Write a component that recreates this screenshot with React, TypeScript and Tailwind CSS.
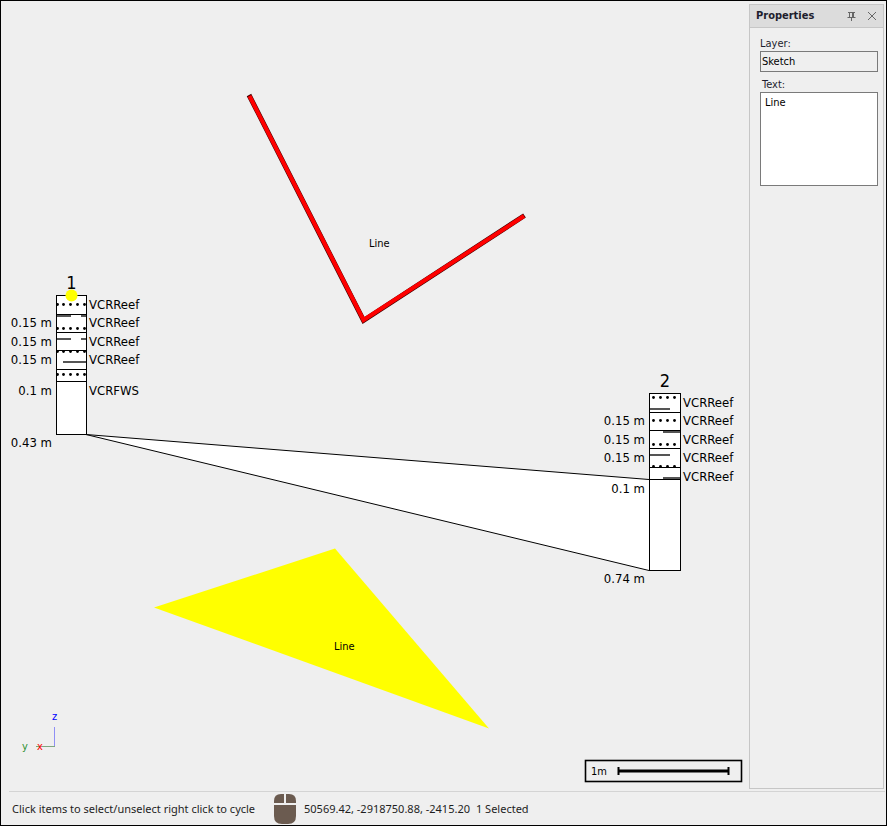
import type { ReactNode } from 'react';

interface Seam {
  y: number;
  x: number;
  w: number;
}

interface Log {
  name: string;
  x: number;
  width: number;
  top: number;
  bottom: number;
  dividers: number[];
  dotRows: number[];
  dots: number[];
  seams: Seam[];
  widths: { y: number; text: string }[];
  units: { y: number; text: string }[];
}

const LOGS: Log[] = [
  {
    name: '1',
    x: 56,
    width: 30,
    top: 295,
    bottom: 434,
    dividers: [314, 332, 350, 369, 381],
    dotRows: [304, 328, 351, 374],
    dots: [57, 63, 70, 77, 84],
    seams: [
      { y: 316, x: 57, w: 14 },
      { y: 316, x: 81, w: 5 },
      { y: 339, x: 57, w: 14 },
      { y: 339, x: 81, w: 5 },
      { y: 362, x: 63, w: 23 },
    ],
    widths: [
      { y: 327, text: '0.15 m' },
      { y: 346, text: '0.15 m' },
      { y: 364, text: '0.15 m' },
      { y: 395, text: '0.1 m' },
      { y: 447, text: '0.43 m' },
    ],
    units: [
      { y: 309, text: 'VCRReef' },
      { y: 327, text: 'VCRReef' },
      { y: 346, text: 'VCRReef' },
      { y: 364, text: 'VCRReef' },
      { y: 395, text: 'VCRFWS' },
    ],
  },
  {
    name: '2',
    x: 649,
    width: 31,
    top: 393,
    bottom: 570,
    dividers: [412, 430, 448, 467, 479],
    dotRows: [397, 420, 444, 466],
    dots: [653, 660, 667, 674],
    seams: [
      { y: 409, x: 650, w: 20 },
      { y: 432, x: 663, w: 17 },
      { y: 455, x: 650, w: 20 },
      { y: 478, x: 663, w: 17 },
    ],
    widths: [
      { y: 425, text: '0.15 m' },
      { y: 444, text: '0.15 m' },
      { y: 462, text: '0.15 m' },
      { y: 493, text: '0.1 m' },
      { y: 583, text: '0.74 m' },
    ],
    units: [
      { y: 407, text: 'VCRReef' },
      { y: 425, text: 'VCRReef' },
      { y: 444, text: 'VCRReef' },
      { y: 462, text: 'VCRReef' },
      { y: 481, text: 'VCRReef' },
    ],
  },
];

function LogColumn({ log, children }: { log: Log; children?: ReactNode }) {
  const right = log.x + log.width;
  return (
    <g>
      <rect
        x={log.x + 0.5}
        y={log.top + 0.5}
        width={log.width}
        height={log.bottom - log.top}
        fill="#fff"
        stroke="#000"
      />
      {log.seams.map((s) => (
        <rect key={`${s.x}-${s.y}`} x={s.x} y={s.y - 1} width={s.w} height="2" fill="#555" />
      ))}
      {log.dotRows.map((y) =>
        log.dots.map((x) => <circle key={`${x}-${y}`} cx={x + 0.5} cy={y + 0.5} r="1.4" />),
      )}
      {log.dividers.map((y) => (
        <rect key={y} x={log.x} y={y} width={log.width + 1} height="1" />
      ))}
      {children}
      <text x={(log.x + right + 1) / 2} y={log.top - 6} textAnchor="middle" className="text-[18px]">
        {log.name}
      </text>
      {log.widths.map((l) => (
        <text key={l.y} x={log.x - 4} y={l.y} textAnchor="end">
          {l.text}
        </text>
      ))}
      {log.units.map((l) => (
        <text key={l.y} x={right + 3} y={l.y}>
          {l.text}
        </text>
      ))}
    </g>
  );
}

function Axes() {
  return (
    <g className="text-[11px]">
      <path d="M54.5 727V746" stroke="#8f8ff5" fill="none" />
      <path d="M36 746.5H55" stroke="#7fa67f" fill="none" />
      <text x="52" y="720" fill="#0000ff">z</text>
      <text x="22" y="750" fill="#2f8f2f">y</text>
      <text x="37" y="750" fill="#ff0000">x</text>
    </g>
  );
}

function ScaleBar() {
  return (
    <g>
      <rect x="585.5" y="760.5" width="156" height="21" fill="none" stroke="#000" strokeWidth="1.6" />
      <path d="M618 771H729" fill="none" stroke="#000" strokeWidth="3" />
      <path d="M618.5 767V775M728.5 767V775" fill="none" stroke="#000" strokeWidth="2" />
      <text x="591" y="775" className="text-[11px]">1m</text>
    </g>
  );
}

function SectionView() {
  return (
    <svg
      viewBox="1 1 748 790"
      preserveAspectRatio="xMinYMin meet"
      role="img"
      aria-label="Section view"
      className="block w-full font-['DejaVu_Sans_Condensed','DejaVu_Sans',sans-serif] text-[13px]"
    >
      <path d="M86 434.5L649 479.5V570.5Z" fill="#fff" />
      <path d="M86 434.5L649 479.5M86 434.5L649 570.5" stroke="#000" fill="none" />
      <path d="M249 95L363.5 320.5L524.5 215.5" fill="none" stroke="#400" strokeWidth="5" />
      <path d="M249.5 96L363.5 320L524 216" fill="none" stroke="#f00" strokeWidth="4" />
      <path d="M154 607.5L335 548.5L489 728.5Z" fill="#ff0" />
      <LogColumn log={LOGS[0]}>
        <circle cx="71.5" cy="295.5" r="6" fill="#ff0" />
      </LogColumn>
      <LogColumn log={LOGS[1]} />
      <g className="text-[11px]">
        <text x="369" y="247">Line</text>
        <text x="334" y="650">Line</text>
      </g>
      <Axes />
      <ScaleBar />
    </svg>
  );
}

function PropertiesPanel() {
  return (
    <aside className="mt-[3px] mr-[2px] mb-[2px] w-[135px] shrink-0 border border-[#c6c6c6] font-['DejaVu_Sans_Condensed','DejaVu_Sans',sans-serif] text-[11px] text-[#1e1e2d]">
      <header className="flex h-[23px] items-center border-b border-[#c6c6c6] bg-[#dcdcdc] pr-1.5 pl-1.5">
        <h2 className="flex-1 font-bold">Properties</h2>
        <button type="button" aria-label="Pin panel" className="mr-[10px]">
          <svg width="11" height="11" viewBox="0 0 11 11" fill="none" stroke="#666" className="block">
            <path d="M2 1.5H9M3.5 1.5V6M7.5 1.5V6M6.5 1.5V6M1.5 6.5H9.5M5.5 6.5V10" />
          </svg>
        </button>
        <button type="button" aria-label="Close panel">
          <svg width="10" height="10" viewBox="0 0 10 10" fill="none" stroke="#666" className="block">
            <path d="M1 1L9 9M9 1L1 9" />
          </svg>
        </button>
      </header>
      <div className="flex flex-col pt-2 pr-[5px] pl-[10px]">
        <label htmlFor="layer" className="leading-[15px]">Layer:</label>
        <input
          id="layer"
          readOnly
          defaultValue="Sketch"
          className="h-[21px] w-full border border-[#7a7a7a] bg-[#efefef] px-px text-black outline-none"
        />
        <label htmlFor="text" className="mt-[5px] pl-0.5 leading-[15px]">Text:</label>
        <textarea
          id="text"
          defaultValue="Line"
          className="h-[94px] w-full resize-none border border-[#7a7a7a] bg-white px-1 py-0.5 leading-[15px] text-black outline-none"
        />
      </div>
    </aside>
  );
}

function MouseIcon() {
  return (
    <svg width="22" height="30" viewBox="0 0 22 30" fill="#6b5b50" aria-hidden="true" className="block">
      <path d="M10 0V9H0V7Q0 0 7 0ZM12 0H15Q22 0 22 7V9H12ZM0 11H22V22Q22 30 14 30H8Q0 30 0 22Z" />
    </svg>
  );
}

function StatusBar() {
  return (
    <footer className="mr-px ml-2 flex h-[34px] items-center border-t border-[#d4d4d4] pt-px pl-[3px] font-['Noto_Sans',sans-serif] text-[11px] text-[#1e1e1e]">
      <span className="min-w-[254px]">Click items to select/unselect right click to cycle</span>
      <span className="mx-2">
        <MouseIcon />
      </span>
      <span>50569.42, -2918750.88, -2415.20</span>
      <span className="ml-1.5">1 Selected</span>
    </footer>
  );
}

export default function App() {
  return (
    <div className="flex min-h-screen flex-col border border-black bg-[#efefef]">
      <div className="flex flex-1">
        <main className="min-w-0 flex-1">
          <SectionView />
        </main>
        <PropertiesPanel />
      </div>
      <StatusBar />
    </div>
  );
}
